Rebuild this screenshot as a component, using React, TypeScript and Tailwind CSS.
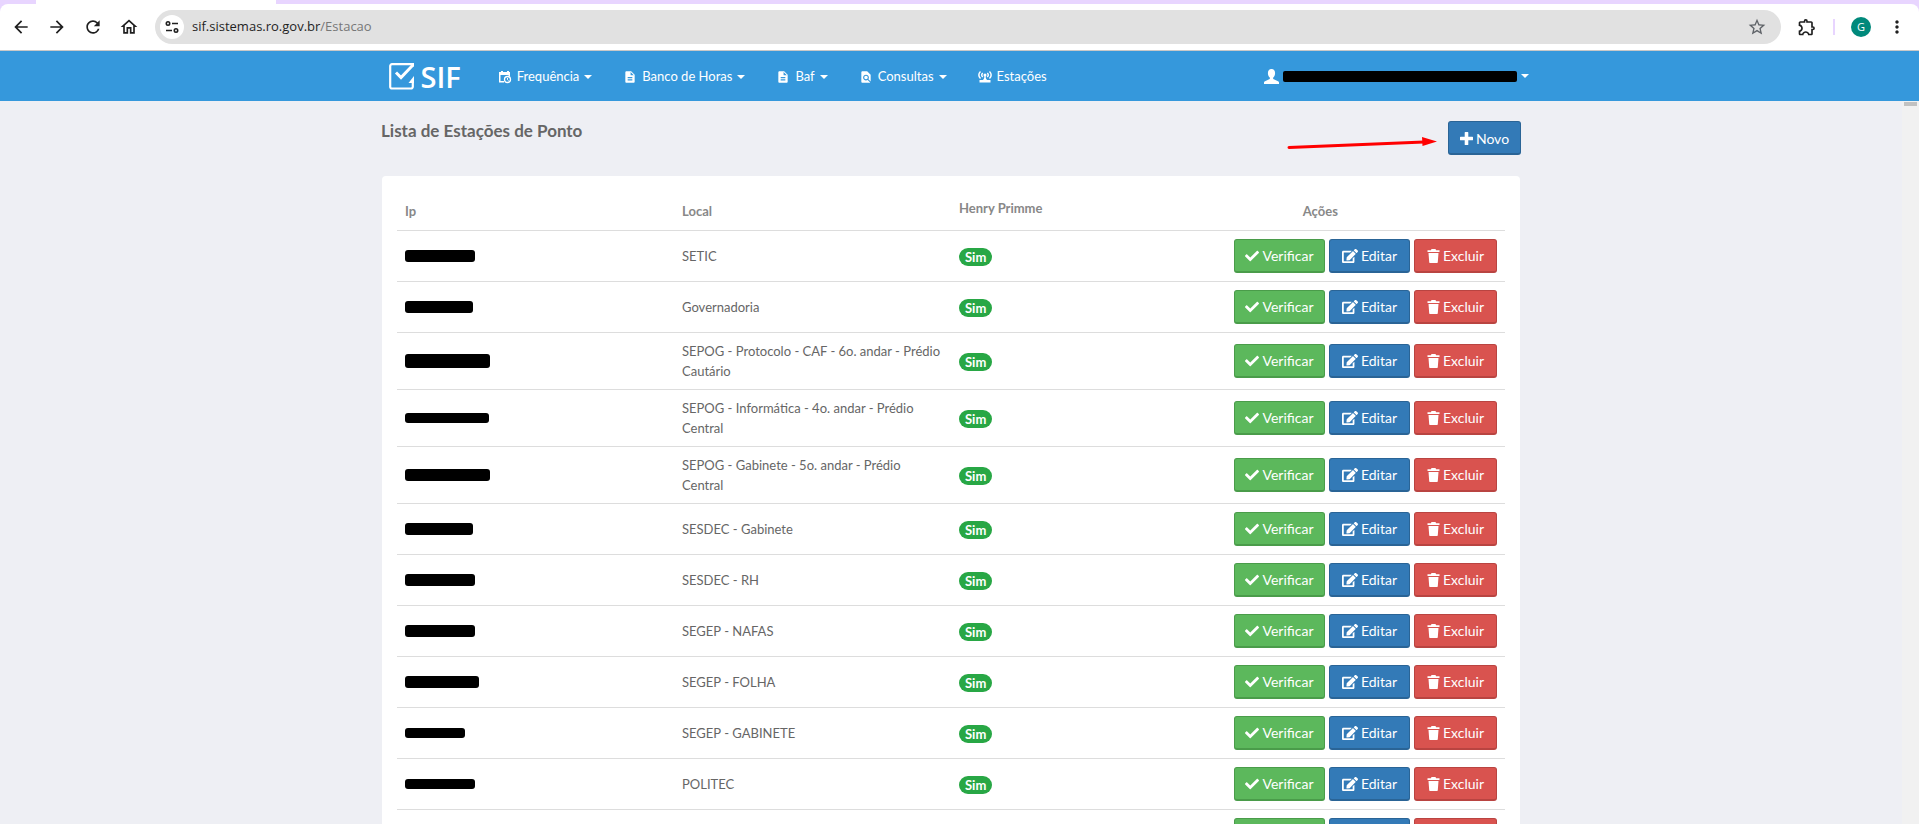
import { FaCheck, FaEdit } from "react-icons/fa";
import {
  MdArrowBack,
  MdArrowForward,
  MdDescription,
  MdFindInPage,
  MdMoreVert,
  MdOutlineExtension,
  MdOutlineHome,
  MdRefresh,
  MdStarBorder,
} from "react-icons/md";
import type { ReactNode } from "react";

const stations = [
  { ip: "w-[70px] h-3", local: "SETIC" },
  { ip: "w-[68px] h-3", local: "Governadoria" },
  { ip: "w-[85px] h-3.5", local: "SEPOG - Protocolo - CAF - 6o. andar - Prédio Cautário" },
  { ip: "w-[84px] h-2.5", local: "SEPOG - Informática - 4o. andar - Prédio Central" },
  { ip: "w-[85px] h-3", local: "SEPOG - Gabinete - 5o. andar - Prédio Central" },
  { ip: "w-[68px] h-3", local: "SESDEC - Gabinete" },
  { ip: "w-[70px] h-3", local: "SESDEC - RH" },
  { ip: "w-[70px] h-3", local: "SEGEP - NAFAS" },
  { ip: "w-[74px] h-3", local: "SEGEP - FOLHA" },
  { ip: "w-[60px] h-2.5", local: "SEGEP - GABINETE" },
  { ip: "w-[70px] h-2.5", local: "POLITEC" },
  { ip: "w-[70px] h-3", local: "" },
];

const menu = [
  { label: "Frequência", icon: <CalendarClock />, caret: true },
  { label: "Banco de Horas", icon: <MdDescription size={14} />, caret: true },
  { label: "Baf", icon: <MdDescription size={14} />, caret: true },
  { label: "Consultas", icon: <MdFindInPage size={14} />, caret: true },
  { label: "Estações", icon: <Antenna />, caret: false },
];

function CalendarClock() {
  return (
    <svg width="14" height="14" viewBox="0 0 14 14" fill="none" aria-hidden="true">
      <path d="M1 2h2V1h2v1h4V1h2v1h1v4h-1.500V5H2.500v6H6v1.500H1z" fill="white" />
      <circle cx="9.500" cy="9.500" r="3" stroke="white" strokeWidth="1.300" />
      <path d="M9.500 8v1.700l1 .8" stroke="white" />
    </svg>
  );
}

function Antenna() {
  return (
    <svg width="14" height="14" viewBox="0 0 14 14" fill="none" stroke="white" aria-hidden="true">
      <path
        d="M2.500 1.500C.3 3.500.3 6.500 2.500 8.500M11.500 1.500c2.200 2 2.200 5 0 7M4.700 3c-1.300 1.200-1.300 2.800 0 4M9.300 3c1.300 1.200 1.300 2.800 0 4"
        strokeWidth="1.500"
      />
      <circle cx="7" cy="5" r="1.500" fill="white" stroke="none" />
      <path d="M7 5v6" strokeWidth="1.300" />
      <path d="M7 7l2 3h3.500v2.500h-11V10H5z" fill="white" stroke="none" />
    </svg>
  );
}

function UserIcon() {
  return (
    <svg width="15" height="15" viewBox="0 0 15 15" fill="white" aria-hidden="true">
      <path d="M7.500 0C5 0 3.900 1.700 3.900 4c0 2 .8 3.500 1.800 4.500.4.600.2 1.400-.5 1.800L1 12.200C.3 12.600 0 13 0 13.600V15h15v-1.400c0-.6-.3-1-1-1.400l-4.200-1.900c-.7-.4-.9-1.200-.5-1.800 1-1 1.800-2.500 1.800-4.500 0-2.300-1.100-4-3.600-4z" />
    </svg>
  );
}

function PlusIcon() {
  return (
    <svg width="13" height="13" viewBox="0 0 13 13" fill="currentColor" aria-hidden="true">
      <path d="M5.300 0h2.400q.6 0 .6.6v4.100h4.100q.6 0 .6.600v2.400q0 .6-.6.6H8.300v4.100q0 .6-.6.600H5.300q-.6 0-.6-.6V8.300H.6q-.6 0-.6-.6V5.300q0-.6.600-.6h4.100V.6q0-.6.600-.6z" />
    </svg>
  );
}

function TrashIcon() {
  return (
    <svg width="13" height="14" viewBox="0 0 12 14" fill="currentColor" aria-hidden="true">
      <path d="M4 0h4l.6 1.200H12V3H0V1.200h3.400zM1 4h10l-.7 9c0 .6-.4 1-1 1H2.700c-.6 0-1-.4-1-1z" />
    </svg>
  );
}

function Logo() {
  return (
    <a
      href="#"
      className="flex items-center gap-[7px] font-['Open_Sans',sans-serif] text-[29px] leading-none font-semibold"
    >
      <svg width="25" height="27" viewBox="0 0 25 27" fill="none" aria-hidden="true">
        <path
          d="M24 3.500V1.200H3A1.800 1.800 0 0 0 1.200 3v20.500A1.800 1.800 0 0 0 3 25.500h19a1.800 1.800 0 0 0 1.800-1.800V18"
          stroke="white"
          strokeWidth="2.200"
        />
        <path d="M7 9.500l5 5L24 2" stroke="white" strokeWidth="3" />
        <path d="M25 13v7h-5.500z" fill="white" />
      </svg>
      SIF
    </a>
  );
}

function Caret() {
  return <span className="border-x-4 border-t-4 border-x-transparent border-t-white" />;
}

function ActionButton({ className, children }: { className: string; children: ReactNode }) {
  return (
    <button
      type="button"
      className={`inline-flex h-[34px] items-center justify-center gap-[3px] rounded-[3px] border border-b-2 pt-0.5 text-sm leading-4 whitespace-nowrap text-white ${className}`}
    >
      {children}
    </button>
  );
}

function BrowserBar() {
  return (
    <header className="shrink-0 bg-[#e8d5ff] font-['Open_Sans',sans-serif]">
      <div className="flex h-1 px-9">
        <div className="w-60 bg-white" />
      </div>
      <div className="flex h-[47px] items-center rounded-t-lg border-b border-[#c8c8c8] bg-white pr-3 pl-[11px] text-[#1f1f1f]">
        <div className="flex gap-4">
          <button type="button" aria-label="Voltar"><MdArrowBack size={20} /></button>
          <button type="button" aria-label="Avançar"><MdArrowForward size={20} /></button>
          <button type="button" aria-label="Recarregar"><MdRefresh size={20} /></button>
          <button type="button" aria-label="Início"><MdOutlineHome size={20} /></button>
        </div>
        <div className="ml-4 flex h-[34px] flex-1 items-center rounded-full bg-[#e1e1e1] pr-3.5 pl-[5px]">
          <span className="flex size-6 items-center justify-center rounded-full bg-white">
            <svg width="14" height="12" viewBox="0 0 14 12" fill="none" stroke="#1f1f1f" strokeWidth="1.600" aria-hidden="true">
              <circle cx="3" cy="2.500" r="1.700" />
              <path d="M7 2.500h6M1 9.500h6" />
              <circle cx="11" cy="9.500" r="1.700" />
            </svg>
          </span>
          <p className="ml-2 flex-1 text-[13px]">
            sif.sistemas.ro.gov.br<span className="text-[#777]">/Estacao</span>
          </p>
          <button type="button" aria-label="Favoritar" className="text-[#5f6368]">
            <MdStarBorder size={20} />
          </button>
        </div>
        <button type="button" aria-label="Extensões" className="ml-4"><MdOutlineExtension size={20} /></button>
        <span className="ml-4 h-4 w-0.5 bg-[#e8d5ff]" />
        <span className="mx-4 flex size-5 items-center justify-center rounded-full bg-[#00897b] text-[11px] text-white">
          G
        </span>
        <button type="button" aria-label="Menu"><MdMoreVert size={20} /></button>
      </div>
    </header>
  );
}

function Navbar() {
  return (
    <nav className="shrink-0 bg-[#3598dc] text-[13px] text-white">
      <div className="mx-auto flex h-[50px] max-w-[1170px] items-center pr-4 pl-3.5">
        <Logo />
        <ul className="ml-[37px] flex gap-[31px] pt-px">
          {menu.map((item) => (
            <li key={item.label}>
              <a href="#" className="flex items-center gap-[5px]">
                {item.icon}
                {item.label}
                {item.caret && <Caret />}
              </a>
            </li>
          ))}
        </ul>
        <a href="#" aria-label="Usuário" className="ml-auto flex items-center gap-1">
          <UserIcon />
          <span className="h-[11px] w-[234px] rounded-xs bg-black" />
          <Caret />
        </a>
      </div>
    </nav>
  );
}

export default function App() {
  return (
    <div className="flex h-screen flex-col overflow-hidden bg-[#eeeff4] font-[Lato,sans-serif] text-[#666]">
      <BrowserBar />
      <Navbar />
      <div className="flex min-h-0 flex-1">
        <main className="min-w-0 flex-1 overflow-hidden">
          <div className="mx-auto max-w-[1170px] px-[15px] pt-5">
            <div className="relative flex items-start justify-between">
              <h1 className="text-[17px] leading-5 font-bold">Lista de Estações de Ponto</h1>
              <svg className="absolute top-[15px] right-[83px]" width="154" height="20" viewBox="0 0 154 20" aria-hidden="true">
                <path d="M5 11.500L140 6" stroke="red" strokeWidth="3" strokeLinecap="round" />
                <path d="M138 1l15 4.500-14.500 4.500z" fill="red" />
              </svg>
              <ActionButton className="w-[73px] border-[#2a6496] bg-[#337ab7]">
                <PlusIcon />
                Novo
              </ActionButton>
            </div>
            <section className="mx-px mt-[21px] rounded bg-white p-[15px]">
              <table className="w-full table-fixed text-left text-[13px] leading-5">
                <thead className="text-[#888]">
                  <tr className="h-[39px]">
                    <th className="w-1/4 px-2 pb-[9px] align-bottom">Ip</th>
                    <th className="w-1/4 px-2 pb-[9px] align-bottom">Local</th>
                    <th className="w-1/6 px-2 pt-[7px] align-top">Henry Primme</th>
                    <th className="w-1/3 px-2 pb-[9px] text-center align-bottom">Ações</th>
                  </tr>
                </thead>
                <tbody>
                  {stations.map((station, index) => (
                    <tr key={index} className="border-t border-[#ddd]">
                      <td className="px-2">
                        <span className={`block rounded-[3px] bg-black ${station.ip}`} />
                      </td>
                      <td className="p-2">{station.local}</td>
                      <td className="px-2 pt-0.5">
                        <span className="inline-block rounded-full bg-[#28a745] px-1.5 leading-[18px] font-bold text-white">
                          Sim
                        </span>
                      </td>
                      <td className="p-2">
                        <div className="flex justify-end gap-1">
                          <ActionButton className="w-[91px] border-[#4a9c4a] bg-[#5cb85c]">
                            <FaCheck size={14} />
                            Verificar
                          </ActionButton>
                          <ActionButton className="w-[81px] border-[#2a6496] bg-[#337ab7]">
                            <FaEdit size={16} />
                            Editar
                          </ActionButton>
                          <ActionButton className="w-[83px] border-[#b94441] bg-[#d9534f]">
                            <TrashIcon />
                            Excluir
                          </ActionButton>
                        </div>
                      </td>
                    </tr>
                  ))}
                </tbody>
              </table>
            </section>
          </div>
        </main>
        <div className="w-[17px] shrink-0 bg-[#f1f1f1] px-0.5 pt-px">
          <div className="h-1 bg-[#c1c1c1]" />
        </div>
      </div>
    </div>
  );
}
